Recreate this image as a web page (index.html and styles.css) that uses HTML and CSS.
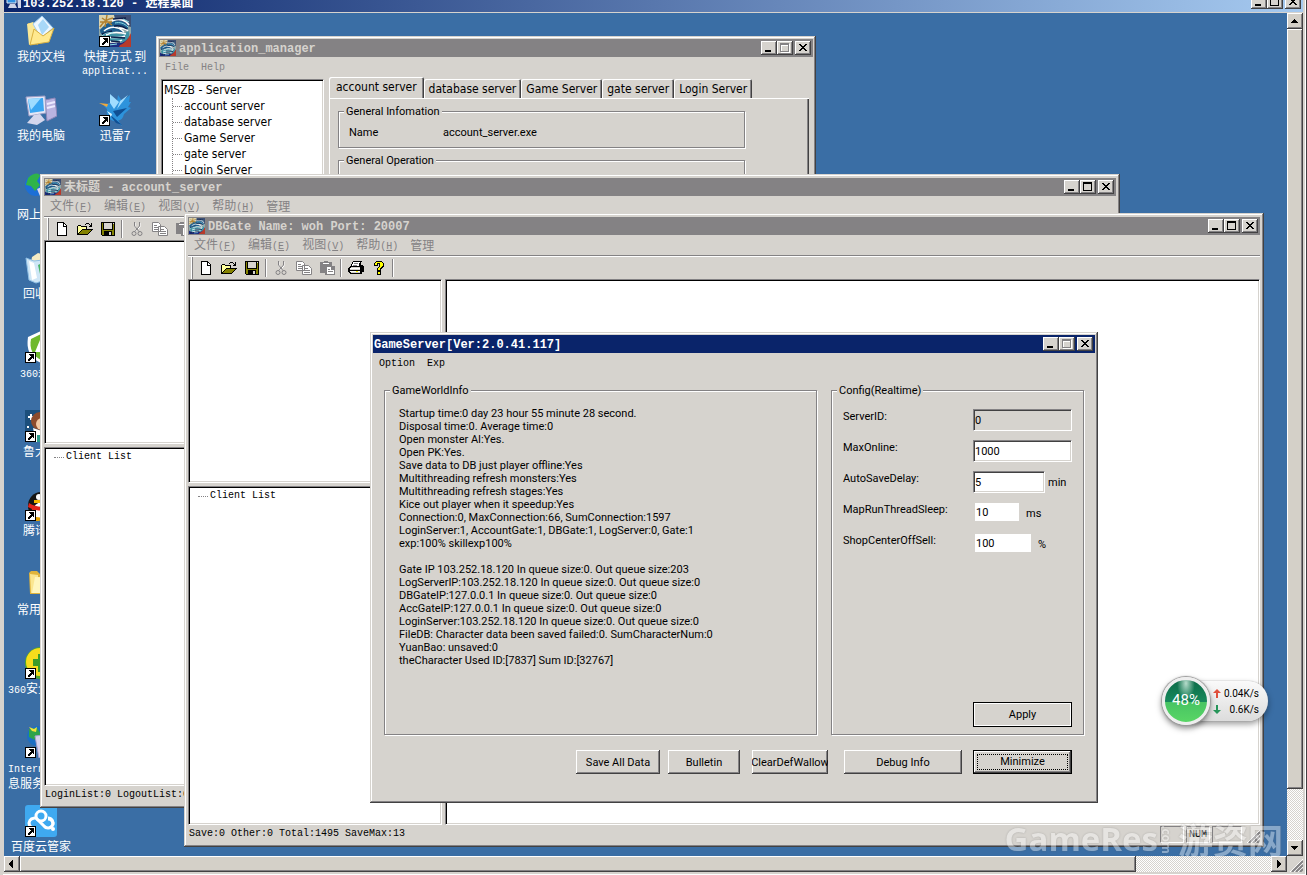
FILE: index.html
```html
<!DOCTYPE html>
<html lang="zh-CN">

<head>
    <meta charset="UTF-8">
    <meta name="viewport" content="width=device-width, initial-scale=1.0">
    <title>103.252.18.120 - 远程桌面</title>
    <link rel="stylesheet" href="styles.css">
</head>

<body>

    <!-- shared icons -->
    <svg class="symbols" aria-hidden="true">
        <symbol id="i-min" viewBox="0 0 16 14"><path d="M4 9h6v2H4z"/></symbol>
        <symbol id="i-max" viewBox="0 0 16 14"><path fill-rule="evenodd" d="M3 2h9v9H3zM4 4v6h7V4z"/></symbol>
        <symbol id="i-max-off" viewBox="0 0 16 14"><path fill="#fff" fill-rule="evenodd" d="M4 3h9v9H4zM5 5v6h7V5z"/><path fill="#848284" fill-rule="evenodd" d="M3 2h9v9H3zM4 4v6h7V4z"/></symbol>
        <symbol id="i-close" viewBox="0 0 16 14"><path d="M4 3h2v1h1v1h2V4h1V3h2v1h-1v1h-1v1H9v1h1v1h1v1h1v1h-2V9H9V8H7v1H6v1H4V9h1V8h1V7h1V6H6V5H5V4H4z"/></symbol>
        <symbol id="i-up" viewBox="0 0 16 16"><path d="M7 6h1v1h1v1h1v1h1v1H4V9h1V8h1V7h1z"/></symbol>
        <symbol id="i-down" viewBox="0 0 16 16"><path d="M4 6h7v1h-1v1H9v1H8v1H7V9H6V8H5V7H4z"/></symbol>
        <symbol id="i-left" viewBox="0 0 16 16"><path d="M9 4v8H8v-1H7v-1H6V9H5V7h1V6h1V5h1V4z"/></symbol>
        <symbol id="i-right" viewBox="0 0 16 16"><path d="M6 4v8h1v-1h1v-1h1V9h1V7H9V6H8V5H7V4z"/></symbol>
        <symbol id="i-grip" viewBox="0 0 13 13"><path stroke="#fff" d="M0 13L13 0M4 13l9-9M8 13l5-5"/><path stroke="#848284" stroke-width="2" d="M2 13L13 2M6 13l7-7M10 13l3-3"/></symbol>

        <symbol id="i-game" viewBox="0 0 32 32">
            <rect width="32" height="32" fill="#8fa8a8"/>
            <path fill="#d9d3b0" d="M0 0h15v10L0 14z"/>
            <path fill="#3c4f74" d="M15 0h17v12L18 8z"/>
            <path fill="#1f5f8f" d="M1 15c6-8 14-10 21-9 5 1 8 5 7 9-4-5-11-5-16-2 6 0 11 2 12 6-6-4-13-3-18 1-4 1-6-1-6-5z"/>
            <path fill="#3f93a5" d="M2 23c4-5 12-6 18-4 4 1 7 0 9-4 3 7 0 12-6 12-6-1-10-3-13 1-4 1-7-1-8-5z"/>
            <path fill="#1c2c80" d="M0 25c6 6 15 2 20 3 5 0 8-3 12-8v12H0z"/>
            <path fill="#b83a2b" d="M21 30c5-2 8-6 11-12v14H20z"/>
            <path fill="none" stroke="#fff" stroke-width="1.500" d="M13 6c7-3 14-1 17 4M5 16c7-6 15-4 20 1M7 20c6-3 13-3 20-1M6 24c5-4 13 1 20-3M6 28c6-3 11 1 17-3M20 13c4 0 7 1 9 3"/>
            <path fill="none" stroke="#b3822f" stroke-width="1.500" d="M1 12c3-5 7-8 13-9M3 3l10 7M8 0l-2 12M1 7h12"/>
            <path fill="none" stroke="#0d1f4a" stroke-width="1.500" d="M14 4l13-1M3 19l10-3M12 22l14 1M15 11c5-1 9 0 13 3M12 26l9 1M2 30l8-1"/>
            <path fill="none" stroke="#8ee0e8" d="M16 8c5-1 9 0 13 4M3 21c3-3 7-4 11-3M10 30l8-1M24 4l6 3"/>
        </symbol>
        <symbol id="i-shortcut" viewBox="0 0 11 11"><path fill="#000" d="M0 0h11v11H0z"/><path fill="#fff" d="M1 1h9v9H1z"/><path fill="#000" d="M4 2h5v5H8V6H7v1H6v1H5v1H3V7h1V6h1V5h1V4H5V3H4z"/></symbol>

        <symbol id="i-new" viewBox="0 0 16 16"><path fill="#000" d="M3 1h7v1h1v1h1v1h1v11H3z"/><path fill="#fff" d="M4 2h5v4h3v8H4z"/><path fill="#fff" d="M10 3h1v1h1v1h-2z"/></symbol>
        <symbol id="i-open" viewBox="0 0 16 16"><path fill="#000" d="M9 2h3v1H9zM8 3h1v1H8zM12 3h1v1h1V2h1v4h-3V5h1V4h-1zM1 4h3v1h6v3h6v1h-1v1h-1v1h-1v1h-1v1h-1v1H0V5h1z"/><path fill="#ffff9c" d="M1 5h3v1h5v2H5v1H4v1H3v1H2v1H1z"/><path fill="#848200" d="M5 9h9v1h-1v1h-1v1h-1v1H2v-1h1v-1h1v-1h1z"/></symbol>
        <symbol id="i-save" viewBox="0 0 16 16"><path fill="#000" d="M1 1h14v14H2v-1H1z"/><path fill="#848200" d="M2 2h1v7h10V2h1v12h-2v-4H4v4H2z"/><path fill="#d6d3ce" d="M4 2h8v6H4zM9 11h2v3H9zM13 2h1v1h-1z"/></symbol>
        <symbol id="i-cut" viewBox="0 0 16 16"><path fill="none" stroke="#fff" d="M6 2v4l5 5M11 2v4l-5 5"/><path fill="none" stroke="#848284" d="M5.5 1v4l5 6M10.500 1v4l-5 6"/><circle cx="5" cy="12.500" r="2" fill="none" stroke="#848284"/><circle cx="11" cy="12.500" r="2" fill="none" stroke="#848284"/></symbol>
        <symbol id="i-copy" viewBox="0 0 16 16"><path fill="#fff" stroke="#848284" d="M.5 1.500h6l2 2v7h-8zM6.500 5.500h6l3 3v6h-9z"/><path stroke="#848284" d="M2 4.500h3M2 6.500h4M2 8.500h4M8 8.500h4M8 10.500h6M8 12.500h6"/></symbol>
        <symbol id="i-paste" viewBox="0 0 16 16"><path fill="#848284" d="M1 2h4V1h4v1h4v4h3v9H6v-2H1z"/><path fill="#fff" d="M4 3h6v1H4zM8 7h4v3h3v4H8z"/><path fill="#848284" d="M9 9h2v1H9zM9 11h5v1H9z"/></symbol>
        <symbol id="i-print" viewBox="0 0 16 16"><path fill="#000" d="M5 1h9v1h-1v3h2v1h1v6h-2v2H2v-1H1v-1H0V8h1V7h1V6h1V4h1V2h1z"/><path fill="#fff" d="M5 2h7v1h-1v3H4V4h1zM2 8h10v1H2zM2 11h10v1H2z"/><path fill="#d6d3ce" d="M3 7h9v1H3zM2 9h10v1H2zM3 12h9v1H3z"/><path fill="#848284" d="M6 3h4v1H6zM5 5h4v1H5z"/><path fill="#ff0" d="M8 11h2v1H8z"/></symbol>
        <symbol id="i-help" viewBox="0 0 16 16"><path fill="#000" d="M5 1h6v1h1v1h1v4h-1v1h-1v1h-1v2H6V8h1V7h1V4H7v2H3V3h1V2h1zM6 11h4v4H6z"/><path fill="#ff0" d="M5 2h6v1h1v3h-1v1h-1v1H9v2H7V8h1V7h1V3H6v2H4V3h1zM7 12h2v2H7z"/></symbol>
    </svg>

    <header class="remote-title">
        <svg class="remote-icon" viewBox="0 0 16 16"><path fill="#2f8fe0" stroke="#dfe8f5" d="M1 1h9v8H1z"/><path fill="#cfd3e6" d="M4 10h5l2 4H2zM11 2h4v12h-3z"/></svg>
        <h1>103.252.18.120 - 远程桌面</h1>
        <div class="controls">
            <button type="button" aria-label="最小化"><svg><use href="#i-min"/></svg></button>
            <button type="button" aria-label="最大化"><svg><use href="#i-max"/></svg></button>
            <button type="button" aria-label="关闭"><svg><use href="#i-close"/></svg></button>
        </div>
    </header>

    <div class="remote">
        <main class="desktop">

            <ul class="icons">
                <li>
                    <svg viewBox="0 0 32 32"><path fill="#d7a93a" d="M3 8l9 2 1 20-9-4z"/><path fill="#fbe896" d="M2 9l6-2 3 3v18l-7 2z"/><path fill="#eef7ff" stroke="#9fcdf0" d="M8 9l9-8 11 12-12 10z"/><path fill="#a8d8f8" d="M13 10l5-6 6 8-7 8z"/><path fill="#ffe98f" stroke="#d9b040" d="M5 30l4-16 9 7 11-8-5 14z"/></svg>
                    <span>我的文档</span>
                </li>
                <li>
                    <svg viewBox="0 0 32 32"><path fill="#b9b3e0" stroke="#8c86b8" d="M20 6l10-2 2 18-10 5z"/><path stroke="#eceaff" stroke-width="2" d="M22 10l8-2M22 14l8-2"/><path fill="#e4e6f6" stroke="#9a9cc4" d="M1 3l19-1 1 17-17 3z"/><path fill="#3aa6f2" d="M3 5l15-1 1 13-14 2z"/><path fill="#9fdcff" d="M3 5l13-1-10 12z"/><path fill="#d4d6ec" d="M9 21l6-1 5 6-8 5-10-2z"/></svg>
                    <span>我的电脑</span>
                </li>
                <li>
                    <svg viewBox="0 0 32 32"><circle cx="11" cy="12" r="11" fill="#1c6fd6"/><path fill="#2fb34a" d="M3 5c6-6 12-5 12-2l-3 5 3 4-5 6-4-5-5-1z"/><path fill="#d9d9ee" d="M12 16l14-6 6 12-14 8z"/></svg>
                    <span>网上邻居</span>
                </li>
                <li>
                    <svg viewBox="0 0 32 32"><path fill="#f6ecc4" d="M7 5l6-4 10 3 5 6H6z"/><path fill="#cfe6f6" stroke="#8fbfe4" d="M1 6l8 3 18-2-4 20-12 4-7-3z"/><path fill="#fff" d="M4 9l5 2 3 15-5 2z"/><path fill="#49b368" d="M13 13l6-3-1 5 3 5-6 2z"/></svg>
                    <span>回收站</span>
                </li>
                <li>
                    <svg viewBox="0 0 32 32"><path fill="#fff" d="M16 0l13 6c1 13-3 21-13 26C5 27 1 19 3 6z"/><path fill="#6fb92c" d="M16 3l10 5c1 10-3 17-10 21C8 25 4 18 6 8z"/><path fill="#fff" d="M15 9l7 12H10z"/></svg>
                    <svg class="arrow"><use href="#i-shortcut"/></svg>
                    <span><small>360</small>杀毒</span>
                </li>
                <li>
                    <svg viewBox="0 0 32 32"><path fill="#1c4f7c" d="M0 0h32v32H0z"/><path fill="#fff" d="M5 4h2v2h2v2H7v2H5V8H3V6h2zM2 16h2v2H2z"/><circle cx="15" cy="11" r="9" fill="#8c4b2c"/><circle cx="17" cy="14" r="6" fill="#f1c9a4"/><path fill="#fff" d="M8 18l9 3 7-3v14H11z"/><path fill="#2c9c8c" d="M12 25h12v7H12z"/></svg>
                    <svg class="arrow"><use href="#i-shortcut"/></svg>
                    <span>鲁大师</span>
                </li>
                <li>
                    <svg viewBox="0 0 32 32"><ellipse cx="16" cy="17" rx="13" ry="14" fill="#151515"/><ellipse cx="17" cy="22" rx="9" ry="9" fill="#fff"/><circle cx="14" cy="8" r="3" fill="#fff"/><path fill="#f5b800" d="M9 11h13v3H9z"/><path fill="#e2231a" d="M4 14c8 5 17 5 24 0v4c-6 4-12 4-17 3v7l-5-2 1-6-4-2z"/><ellipse cx="11" cy="30" rx="6" ry="2" fill="#e8a400"/></svg>
                    <svg class="arrow"><use href="#i-shortcut"/></svg>
                    <span>腾讯<small>QQ</small></span>
                </li>
                <li>
                    <svg viewBox="0 0 32 32"><path fill="#e0b43c" d="M4 5l2-2h6l3 3h13v20H5z"/><path fill="#fbe690" d="M5 6l8 1v2h14v16H6z"/><path fill="#fff6bf" d="M10 9l17 1-3 15H7z"/></svg>
                    <span>常用软件</span>
                </li>
                <li>
                    <svg viewBox="0 0 32 32"><circle cx="16" cy="16" r="16" fill="#4fa82c"/><circle cx="15" cy="15" r="14" fill="#f6dd1c"/><path fill="#3c9c2a" d="M13 7h7v5h5v7h-5v6h-7v-6H8v-7h5z"/></svg>
                    <svg class="arrow"><use href="#i-shortcut"/></svg>
                    <span><small>360</small>安全卫士</span>
                </li>
                <li>
                    <svg viewBox="0 0 32 32"><circle cx="12" cy="10" r="10" fill="#1c6fc4"/><path fill="#2fa34a" d="M4 3l8-1 4 6-6 6-6-3z"/><path fill="#f3e23c" d="M4 1l5 2 3-2-1 5-4-1z"/><path fill="#d9d5ee" stroke="#a5a0cc" d="M10 10l16-2v20l-12 4z"/></svg>
                    <svg class="arrow"><use href="#i-shortcut"/></svg>
                    <span><small>Internet </small>信<br>息服务<small>(IIS)</small></span>
                </li>
                <li>
                    <svg viewBox="0 0 32 32"><rect width="32" height="32" rx="3" fill="#3fa9f0"/><path fill="none" stroke="#fff" stroke-width="3" d="M8 23a5 5 0 1 1 5-8l6 6a5 5 0 1 0 4-8"/><circle cx="16" cy="11" r="5" fill="none" stroke="#fff" stroke-width="3"/><path fill="none" stroke="#fff" stroke-width="3" d="M23 14a5 5 0 0 1 5 6"/><circle cx="28" cy="24" r="2" fill="#fff"/></svg>
                    <svg class="arrow"><use href="#i-shortcut"/></svg>
                    <span>百度云管家</span>
                </li>
                <li>
                    <svg><use href="#i-game"/></svg>
                    <svg class="arrow"><use href="#i-shortcut"/></svg>
                    <span>快捷方式 到<br><small>applicat...</small></span>
                </li>
                <li>
                    <svg viewBox="0 0 32 32"><path fill="#2d93dc" d="M5 12l5-3 8-1 1-7 4 6 8-6-1 7h2l-3 5 3 1-7 6c-1 5-4 7-6 6l4 6-7-5c-6 0-9-6-8-12z"/><path fill="#9fdcff" d="M11 0l9 8-5 7-4-6zM29 1l-8 6-3 8z"/><path fill="#0f4f94" d="M14 17l14-3-10 9zM10 20l5 4 8 7-6-2z"/><path fill="#d8f2ff" d="M8 17l5 3-1 3z"/><path fill="#f0a93c" d="M0 9l9 1-1 3z"/></svg>
                    <svg class="arrow"><use href="#i-shortcut"/></svg>
                    <span>迅雷7</span>
                </li>
                <li>
                    <svg viewBox="0 0 32 32"><path fill="#8fa9bd" d="M1 0h30v32H1z"/><path fill="#dfe8ee" d="M3 2h24v4H3z"/></svg>
                </li>
            </ul>

            <!-- application_manager -->
            <section class="window win-manager">
                <div class="titlebar">
                    <svg class="app-icon"><use href="#i-game"/></svg>
                    <h2>application_manager</h2>
                    <div class="controls">
                        <button type="button" aria-label="Minimize"><svg><use href="#i-min"/></svg></button>
                        <button type="button" aria-label="Maximize" disabled><svg><use href="#i-max-off"/></svg></button>
                        <button type="button" aria-label="Close"><svg><use href="#i-close"/></svg></button>
                    </div>
                </div>
                <nav class="menubar latin">
                    <button type="button">File</button>
                    <button type="button">Help</button>
                </nav>
                <div class="manager-body">
                    <div class="pane tree">
                        MSZB - Server
                        <ul>
                            <li>account server</li>
                            <li>database server</li>
                            <li>Game Server</li>
                            <li>gate server</li>
                            <li>Login Server</li>
                        </ul>
                    </div>
                    <div class="tabs">
                        <div class="tab-row" role="tablist">
                            <button type="button" role="tab" class="selected" aria-selected="true">account server</button>
                            <button type="button" role="tab">database server</button>
                            <button type="button" role="tab">Game Server</button>
                            <button type="button" role="tab">gate server</button>
                            <button type="button" role="tab">Login Server</button>
                        </div>
                        <div class="tab-page">
                            <fieldset>
                                <legend>General Infomation</legend>
                                <dl>
                                    <dt>Name</dt>
                                    <dd>account_server.exe</dd>
                                </dl>
                            </fieldset>
                            <fieldset>
                                <legend>General Operation</legend>
                            </fieldset>
                        </div>
                    </div>
                </div>
            </section>

            <!-- account_server -->
            <section class="window sizable win-account">
                <div class="titlebar">
                    <svg class="app-icon"><use href="#i-game"/></svg>
                    <h2>未标题 - account_server</h2>
                    <div class="controls">
                        <button type="button" aria-label="Minimize"><svg><use href="#i-min"/></svg></button>
                        <button type="button" aria-label="Maximize"><svg><use href="#i-max"/></svg></button>
                        <button type="button" aria-label="Close"><svg><use href="#i-close"/></svg></button>
                    </div>
                </div>
                <nav class="menubar">
                    <button type="button">文件<small>(<u>F</u>)</small></button>
                    <button type="button">编辑<small>(<u>E</u>)</small></button>
                    <button type="button">视图<small>(<u>V</u>)</small></button>
                    <button type="button">帮助<small>(<u>H</u>)</small></button>
                    <button type="button">管理</button>
                </nav>
                <div class="toolbar">
                    <button type="button" aria-label="新建"><svg><use href="#i-new"/></svg></button>
                    <button type="button" aria-label="打开"><svg><use href="#i-open"/></svg></button>
                    <button type="button" aria-label="保存"><svg><use href="#i-save"/></svg></button>
                    <i></i>
                    <button type="button" aria-label="剪切" disabled><svg><use href="#i-cut"/></svg></button>
                    <button type="button" aria-label="复制" disabled><svg><use href="#i-copy"/></svg></button>
                    <button type="button" aria-label="粘贴" disabled><svg><use href="#i-paste"/></svg></button>
                </div>
                <div class="panes">
                    <div class="pane"></div>
                    <div class="pane main-pane"></div>
                    <div class="pane client-list">Client List</div>
                </div>
                <footer class="statusbar">LoginList:0 LogoutList:0</footer>
            </section>

            <!-- DBGate -->
            <section class="window sizable win-dbgate">
                <div class="titlebar">
                    <svg class="app-icon"><use href="#i-game"/></svg>
                    <h2>DBGate Name: woh Port: 20007</h2>
                    <div class="controls">
                        <button type="button" aria-label="Minimize"><svg><use href="#i-min"/></svg></button>
                        <button type="button" aria-label="Maximize"><svg><use href="#i-max"/></svg></button>
                        <button type="button" aria-label="Close"><svg><use href="#i-close"/></svg></button>
                    </div>
                </div>
                <nav class="menubar">
                    <button type="button">文件<small>(<u>F</u>)</small></button>
                    <button type="button">编辑<small>(<u>E</u>)</small></button>
                    <button type="button">视图<small>(<u>V</u>)</small></button>
                    <button type="button">帮助<small>(<u>H</u>)</small></button>
                    <button type="button">管理</button>
                </nav>
                <div class="toolbar">
                    <button type="button" aria-label="新建"><svg><use href="#i-new"/></svg></button>
                    <button type="button" aria-label="打开"><svg><use href="#i-open"/></svg></button>
                    <button type="button" aria-label="保存"><svg><use href="#i-save"/></svg></button>
                    <i></i>
                    <button type="button" aria-label="剪切" disabled><svg><use href="#i-cut"/></svg></button>
                    <button type="button" aria-label="复制" disabled><svg><use href="#i-copy"/></svg></button>
                    <button type="button" aria-label="粘贴" disabled><svg><use href="#i-paste"/></svg></button>
                    <i></i>
                    <button type="button" aria-label="打印"><svg><use href="#i-print"/></svg></button>
                    <button type="button" aria-label="关于"><svg><use href="#i-help"/></svg></button>
                    <i></i>
                </div>
                <div class="panes">
                    <div class="pane"></div>
                    <div class="pane main-pane"></div>
                    <div class="pane client-list">Client List</div>
                </div>
                <footer class="statusbar">
                    <span>Save:0 Other:0 Total:1495 SaveMax:13</span>
                    <b></b>
                    <b>NUM</b>
                    <b></b>
                    <svg class="grip"><use href="#i-grip"/></svg>
                </footer>
            </section>

            <!-- GameServer -->
            <section class="window active win-game">
                <div class="titlebar">
                    <h2>GameServer[Ver:2.0.41.117]</h2>
                    <div class="controls">
                        <button type="button" aria-label="Minimize"><svg><use href="#i-min"/></svg></button>
                        <button type="button" aria-label="Maximize" disabled><svg><use href="#i-max-off"/></svg></button>
                        <button type="button" aria-label="Close"><svg><use href="#i-close"/></svg></button>
                    </div>
                </div>
                <nav class="menubar latin">
                    <button type="button">Option</button>
                    <button type="button">Exp</button>
                </nav>
                <form class="game-body">
                    <fieldset class="world">
                        <legend>GameWorldInfo</legend>
                        <p>
                            Startup time:0 day 23 hour 55 minute 28 second.<br>
                            Disposal time:0. Average time:0<br>
                            Open monster AI:Yes.<br>
                            Open PK:Yes.<br>
                            Save data to DB just player offline:Yes<br>
                            Multithreading refresh monsters:Yes<br>
                            Multithreading refresh stages:Yes<br>
                            Kice out player when it speedup:Yes<br>
                            Connection:0, MaxConnection:66, SumConnection:1597<br>
                            LoginServer:1, AccountGate:1, DBGate:1, LogServer:0, Gate:1<br>
                            exp:100% skillexp100%
                        </p>
                        <p>
                            Gate IP 103.252.18.120 In queue size:0. Out queue size:203<br>
                            LogServerIP:103.252.18.120 In queue size:0. Out queue size:0<br>
                            DBGateIP:127.0.0.1 In queue size:0. Out queue size:0<br>
                            AccGateIP:127.0.0.1 In queue size:0. Out queue size:0<br>
                            LoginServer:103.252.18.120 In queue size:0. Out queue size:0<br>
                            FileDB: Character data been saved failed:0. SumCharacterNum:0<br>
                            YuanBao: unsaved:0<br>
                            theCharacter Used ID:[7837] Sum ID:[32767]
                        </p>
                    </fieldset>
                    <fieldset class="config">
                        <legend>Config(Realtime)</legend>
                        <div class="field">
                            <label for="serverId">ServerID:</label>
                            <input type="text" id="serverId" value="0" readonly>
                        </div>
                        <div class="field">
                            <label for="maxOnline">MaxOnline:</label>
                            <input type="text" id="maxOnline" value="1000">
                        </div>
                        <div class="field">
                            <label for="autoSave">AutoSaveDelay:</label>
                            <input type="text" id="autoSave" class="medium" value="5">
                            <span>min</span>
                        </div>
                        <div class="field">
                            <label for="threadSleep">MapRunThreadSleep:</label>
                            <input type="text" id="threadSleep" class="flat" value="10">
                            <span>ms</span>
                        </div>
                        <div class="field">
                            <label for="offSell">ShopCenterOffSell:</label>
                            <input type="text" id="offSell" class="flat wide" value="100">
                            <span>%</span>
                        </div>
                        <button type="button" class="push apply">Apply</button>
                    </fieldset>
                    <div class="actions">
                        <button type="button" class="push save">Save All Data</button>
                        <button type="button" class="push bulletin">Bulletin</button>
                        <button type="button" class="push clear">ClearDefWallow</button>
                        <button type="button" class="push debug">Debug Info</button>
                        <button type="button" class="push default"><span>Minimize</span></button>
                    </div>
                </form>
            </section>

            <!-- traffic monitor ball -->
            <aside class="monitor">
                <div class="ball">48%</div>
                <div class="speed">
                    <svg viewBox="0 0 8 9"><path fill="#e0503c" d="M4 0l4 4H5v5H3V4H0z"/></svg>
                    <span>0.04K/s</span>
                    <svg viewBox="0 0 8 9"><path fill="#27965a" d="M4 9l4-4H5V0H3v5H0z"/></svg>
                    <span>0.6K/s</span>
                </div>
            </aside>
        </main>

        <div class="scrollbar vertical">
            <button type="button" aria-label="向上"><svg><use href="#i-up"/></svg></button>
            <div class="thumb"></div>
            <div class="track"></div>
            <button type="button" aria-label="向下"><svg><use href="#i-down"/></svg></button>
        </div>
        <div class="scrollbar horizontal">
            <button type="button" aria-label="向左"><svg><use href="#i-left"/></svg></button>
            <div class="thumb"></div>
            <div class="track"></div>
            <button type="button" aria-label="向右"><svg><use href="#i-right"/></svg></button>
        </div>
        <svg class="grip"><use href="#i-grip"/></svg>
    </div>

    <div class="watermark"><b>GameRes</b><small>.com</small><strong>游资网</strong></div>

</body>
</html>
```
FILE: styles.css
```css
:root {
    --face: #d6d3ce;
    --shadow: #848284;
    --dark: #424142;
    --ui: Roboto, "Noto Sans CJK SC", sans-serif;
    --ui-large: "DejaVu Sans Condensed", "Noto Sans CJK SC", sans-serif;
    --song: "Liberation Mono", "Noto Sans CJK SC", monospace;
    --raised: inset -1px -1px var(--dark), inset 1px 1px #fff, inset -2px -2px var(--shadow);
}

* {
    box-sizing: border-box;
}

body {
    margin: 0;
    height: 100vh;
    overflow: hidden;
    display: flex;
    flex-direction: column;
    padding: 0 4px 3px;
    background: var(--face);
    box-shadow: inset 3px 0 var(--face), inset -1px 0 var(--dark), inset -2px -1px #fff;
    font: 11px/13px var(--ui);
    color: #000;
}

h1,
h2,
p,
ul,
dl,
dd {
    margin: 0;
    padding: 0;
}

ul {
    list-style: none;
}

button {
    margin: 0;
    padding: 0;
    border: 0;
    background: var(--face);
    font: inherit;
    color: inherit;
}

svg {
    display: block;
    flex: none;
}

.symbols {
    position: absolute;
    width: 0;
    height: 0;
}

/* title bars */
.remote-title {
    height: 13px;
    display: flex;
    align-items: flex-end;
    border-bottom: 1px solid var(--face);
    background: linear-gradient(to right, #0a246a, #a6caf0);
    color: #fff;
    overflow: hidden;
}

.remote-icon {
    width: 16px;
    height: 16px;
    margin: 0 1px 2px 2px;
}

.remote-title h1 {
    flex: 1;
    font: bold 12px/16px var(--song);
}

.controls {
    display: flex;
}

.controls button {
    width: 16px;
    height: 14px;
    box-shadow: var(--raised);
}

.controls button:last-child {
    margin-left: 2px;
}

.controls svg {
    width: 16px;
    height: 14px;
}

.remote-title .controls {
    margin: 0 2px 3px 0;
}

.titlebar {
    height: 18px;
    display: flex;
    align-items: center;
    padding: 0 2px 0 1px;
    background: var(--shadow);
    color: var(--face);
}

.active > .titlebar {
    background: #0a246a;
    color: #fff;
}

.app-icon {
    width: 16px;
    height: 16px;
    margin-right: 3px;
}

.titlebar h2 {
    flex: 1;
    padding-top: 2px;
    font: bold 12px/16px var(--song);
}

/* remote client area */
.remote {
    flex: 1;
    min-height: 0;
    display: grid;
    grid-template-columns: 1fr 16px;
    grid-template-rows: 1fr 16px;
}

.desktop {
    position: relative;
    overflow: hidden;
    background: #3a6ea5;
}

.scrollbar {
    display: flex;
}

.scrollbar.vertical {
    flex-direction: column;
}

.scrollbar button,
.scrollbar svg {
    width: 16px;
    height: 16px;
}

.scrollbar button,
.thumb {
    background: #d4d0c8;
    box-shadow: var(--raised);
}

.track {
    background: repeating-conic-gradient(#fff 0 25%, #d6d3ce 0 50%) 0 0 / 2px 2px;
}

.vertical .thumb {
    flex: 15;
}

.horizontal .thumb {
    flex: 33;
}

.vertical .track {
    flex: 1;
}

.horizontal .track {
    flex: 4;
}

.grip {
    width: 13px;
    height: 13px;
    align-self: end;
    justify-self: end;
}

/* desktop icons */
.icons {
    display: grid;
    grid-auto-flow: column;
    grid-template-rows: repeat(11, 79px);
    grid-auto-columns: 74px;
    padding-top: 2px;
}

.icons li {
    position: relative;
    display: flex;
    flex-direction: column;
    align-items: center;
    gap: 2px;
    font: 12px/13px "Noto Sans CJK SC", sans-serif;
    color: #fff;
    text-align: center;
    white-space: nowrap;
}

.icons svg {
    width: 32px;
    height: 32px;
}

.icons small {
    font: 10px/12px var(--song);
}

.icons .arrow {
    position: absolute;
    top: 21px;
    left: 21px;
    width: 11px;
    height: 11px;
}

/* windows */
.window {
    position: absolute;
    display: flex;
    flex-direction: column;
    padding: 3px;
    background: var(--face);
    box-shadow: inset -1px -1px var(--dark), inset 1px 1px var(--face), inset -2px -2px var(--shadow), inset 2px 2px #fff;
}

.sizable {
    padding: 4px;
}

.win-manager {
    left: 152px;
    top: 23px;
    width: 660px;
    height: 400px;
}

.win-account {
    left: 36px;
    top: 161px;
    width: 1080px;
    height: 634px;
}

.win-dbgate {
    left: 180px;
    top: 200px;
    width: 1080px;
    height: 634px;
}

.win-game {
    left: 366px;
    top: 319px;
    width: 728px;
    height: 471px;
}

.menubar {
    display: flex;
    height: 20px;
    font: 12px/18px "Noto Sans CJK SC", sans-serif;
    color: var(--shadow);
}

.menubar button {
    padding: 0 6px;
}

.menubar small {
    font: 10px/18px var(--song);
}

.menubar.latin {
    height: 22px;
    font: 10px/22px var(--song);
}

.active .menubar {
    color: #000;
}

.toolbar {
    display: flex;
    align-items: center;
    height: 24px;
    padding-left: 6px;
    border-top: 1px solid var(--shadow);
    box-shadow: inset 0 1px #fff;
    background: linear-gradient(to right, transparent 3px, #fff 3px 4px, var(--shadow) 4px 5px, transparent 5px);
}

.toolbar button {
    width: 23px;
    height: 18px;
    display: grid;
    place-items: center;
    background: none;
}

.toolbar svg {
    width: 16px;
    height: 16px;
}

.toolbar i {
    width: 2px;
    height: 18px;
    margin: 0 2px;
    border-left: 1px solid var(--shadow);
    border-right: 1px solid #fff;
}

.pane {
    border: 1px solid;
    border-color: var(--shadow) #fff #fff var(--shadow);
    box-shadow: inset 1px 1px #000, inset -1px -1px var(--face);
    background: #fff;
}

.panes {
    flex: 1;
    min-height: 0;
    display: grid;
    grid-template-columns: 254px 1fr;
    grid-template-rows: 204px 1fr;
    gap: 3px;
}

.main-pane {
    grid-area: 1 / 2 / 3 / 3;
}

.client-list {
    display: flex;
    align-items: flex-start;
    padding: 2px 9px;
    font: 10px/13px var(--song);
}

.client-list::before {
    content: "";
    width: 10px;
    margin: 7px 2px 0 0;
    border-top: 1px dotted var(--shadow);
}

.statusbar {
    display: flex;
    align-items: center;
    gap: 2px;
    height: 18px;
    padding-left: 1px;
    font: 10px/18px var(--song);
}

.statusbar span {
    flex: 1;
}

.statusbar b {
    width: 24px;
    height: 17px;
    border: 1px solid;
    border-color: var(--shadow) #fff #fff var(--shadow);
    font-weight: normal;
    line-height: 15px;
    text-align: center;
}

.statusbar b:last-of-type {
    width: 30px;
    margin-right: 3px;
}

/* application_manager */
.manager-body {
    flex: 1;
    display: flex;
    padding: 0 4px 4px 2px;
    gap: 5px;
    font: 12px/16px var(--ui-large);
}

.tree {
    width: 163px;
    padding: 2px;
}

.tree ul {
    margin-left: 8px;
    border-left: 1px dotted var(--shadow);
}

.tree li {
    display: flex;
    align-items: center;
    gap: 2px;
}

.tree li::before {
    content: "";
    width: 9px;
    border-top: 1px dotted var(--shadow);
}

.tabs {
    flex: 1;
    display: flex;
    flex-direction: column;
    margin-top: -2px;
}

.tab-row {
    display: flex;
    align-items: flex-end;
    height: 21px;
}

.tab-row button {
    height: 19px;
    padding: 0 5px;
    border-radius: 2px 2px 0 0;
    box-shadow: inset 1px 1px #fff, inset -1px 0 var(--dark), inset -2px 0 var(--shadow);
    white-space: nowrap;
}

.tab-row .selected {
    height: 22px;
    margin-bottom: -1px;
    padding: 0 7px 2px;
}

.tab-page {
    flex: 1;
    width: 480px;
    padding: 7px 64px 0 9px;
    box-shadow: inset 1px 1px #fff, inset -1px 0 var(--dark), inset -2px 0 var(--shadow);
    font: 11px/13px var(--ui);
}

fieldset {
    min-width: 0;
    margin: 0;
    padding: 0;
    border: 1px solid var(--shadow);
    box-shadow: 1px 1px #fff, inset 1px 1px #fff;
}

legend {
    margin-left: 5px;
    padding: 0 2px;
    background: var(--face);
}

.tab-page fieldset {
    height: 43px;
    margin-bottom: 6px;
}

.tab-page dl {
    display: grid;
    grid-template-columns: 94px 1fr;
    padding: 8px 10px;
}

/* GameServer */
.game-body {
    flex: 1;
    display: grid;
    grid-template-columns: 433px 253px;
    grid-template-rows: 351px 24px;
    column-gap: 14px;
    row-gap: 15px;
    padding: 9px 11px;
}

.world p {
    padding: 10px 14px 3px;
}

.config {
    padding-top: 12px;
    position: relative;
}

.field {
    display: flex;
    align-items: flex-start;
    height: 31px;
    padding: 0 11px;
}

.field label {
    width: 130px;
    padding-top: 1px;
}

.field input {
    width: 99px;
    height: 22px;
    padding: 0 1px;
    border: 1px solid;
    border-color: var(--shadow) #fff #fff var(--shadow);
    box-shadow: inset 1px 1px var(--dark), inset -1px -1px var(--face);
    border-radius: 0;
    background: #fff;
    font: inherit;
}

.field input:read-only {
    background: var(--face);
}

.field .medium {
    width: 72px;
}

.field .flat {
    width: 44px;
    height: 18px;
    margin: 1px 0 0 2px;
    border: 0;
    box-shadow: none;
}

.field .wide {
    width: 56px;
}

.field span {
    padding: 5px 0 0 3px;
}

.field .flat + span {
    padding-left: 7px;
}

.push {
    height: 24px;
    overflow: hidden;
    white-space: nowrap;
    box-shadow: var(--raised);
}

.push.apply {
    position: absolute;
    right: 11px;
    bottom: 7px;
    width: 99px;
    height: 25px;
    border: 1px solid #000;
    box-shadow: inset 1px 1px #fff, inset -1px -1px #fff;
}

.actions {
    grid-column: 1 / 3;
    display: grid;
    grid-template-columns: 92px 84px 92px 129px 99px;
    justify-content: end;
    justify-items: start;
    padding-right: 12px;
}

.save {
    width: 84px;
}

.bulletin {
    width: 72px;
}

.clear {
    width: 76px;
    display: flex;
    align-items: center;
    justify-content: center;
}

.debug {
    width: 118px;
}

.default {
    width: 99px;
    padding: 2px;
    border: 1px solid #000;
}

.default span {
    display: block;
    margin: 0 1px;
    border: 1px dotted #000;
    line-height: 14px;
}

/* traffic monitor */
.monitor {
    position: absolute;
    left: 1158px;
    top: 664px;
    display: flex;
    align-items: center;
}

.ball {
    z-index: 1;
    width: 48px;
    height: 48px;
    border: 3px solid #eee;
    border-radius: 50%;
    background: radial-gradient(ellipse at 50% 8%, #b5dccb, transparent 30%), linear-gradient(#0c6b48, #17895c 52%, #48c463 53%, #58d665);
    box-shadow: 0 0 1px 1px #999, 0 3px 6px rgba(0, 0, 0, 0.5);
    color: #fff;
    font: 15px/40px Roboto, sans-serif;
    text-align: center;
}

.speed {
    display: grid;
    grid-template-columns: 8px 1fr;
    align-items: center;
    gap: 2px;
    width: 76px;
    height: 40px;
    margin-left: -18px;
    padding: 5px 9px 5px 21px;
    border-radius: 0 20px 20px 0;
    background: linear-gradient(#fafafa, #dcdcdc);
    box-shadow: 0 0 1px #777, 0 3px 6px rgba(0, 0, 0, 0.4);
    font: 10px/13px Roboto, sans-serif;
    text-align: right;
}

.speed svg {
    width: 8px;
    height: 9px;
}

.watermark {
    position: fixed;
    right: 24px;
    bottom: 18px;
    display: flex;
    align-items: center;
    color: #fff;
    opacity: 0.4;
    line-height: 36px;
    text-shadow: 0 0 2px #666;
    pointer-events: none;
}

.watermark b {
    font: bold 33px/36px "Open Sans", sans-serif;
}

.watermark small {
    writing-mode: vertical-rl;
    font: bold 12px/16px "Open Sans", sans-serif;
}

.watermark strong {
    margin-left: 4px;
    font: bold 35px/36px "Noto Sans CJK SC", sans-serif;
}
```
